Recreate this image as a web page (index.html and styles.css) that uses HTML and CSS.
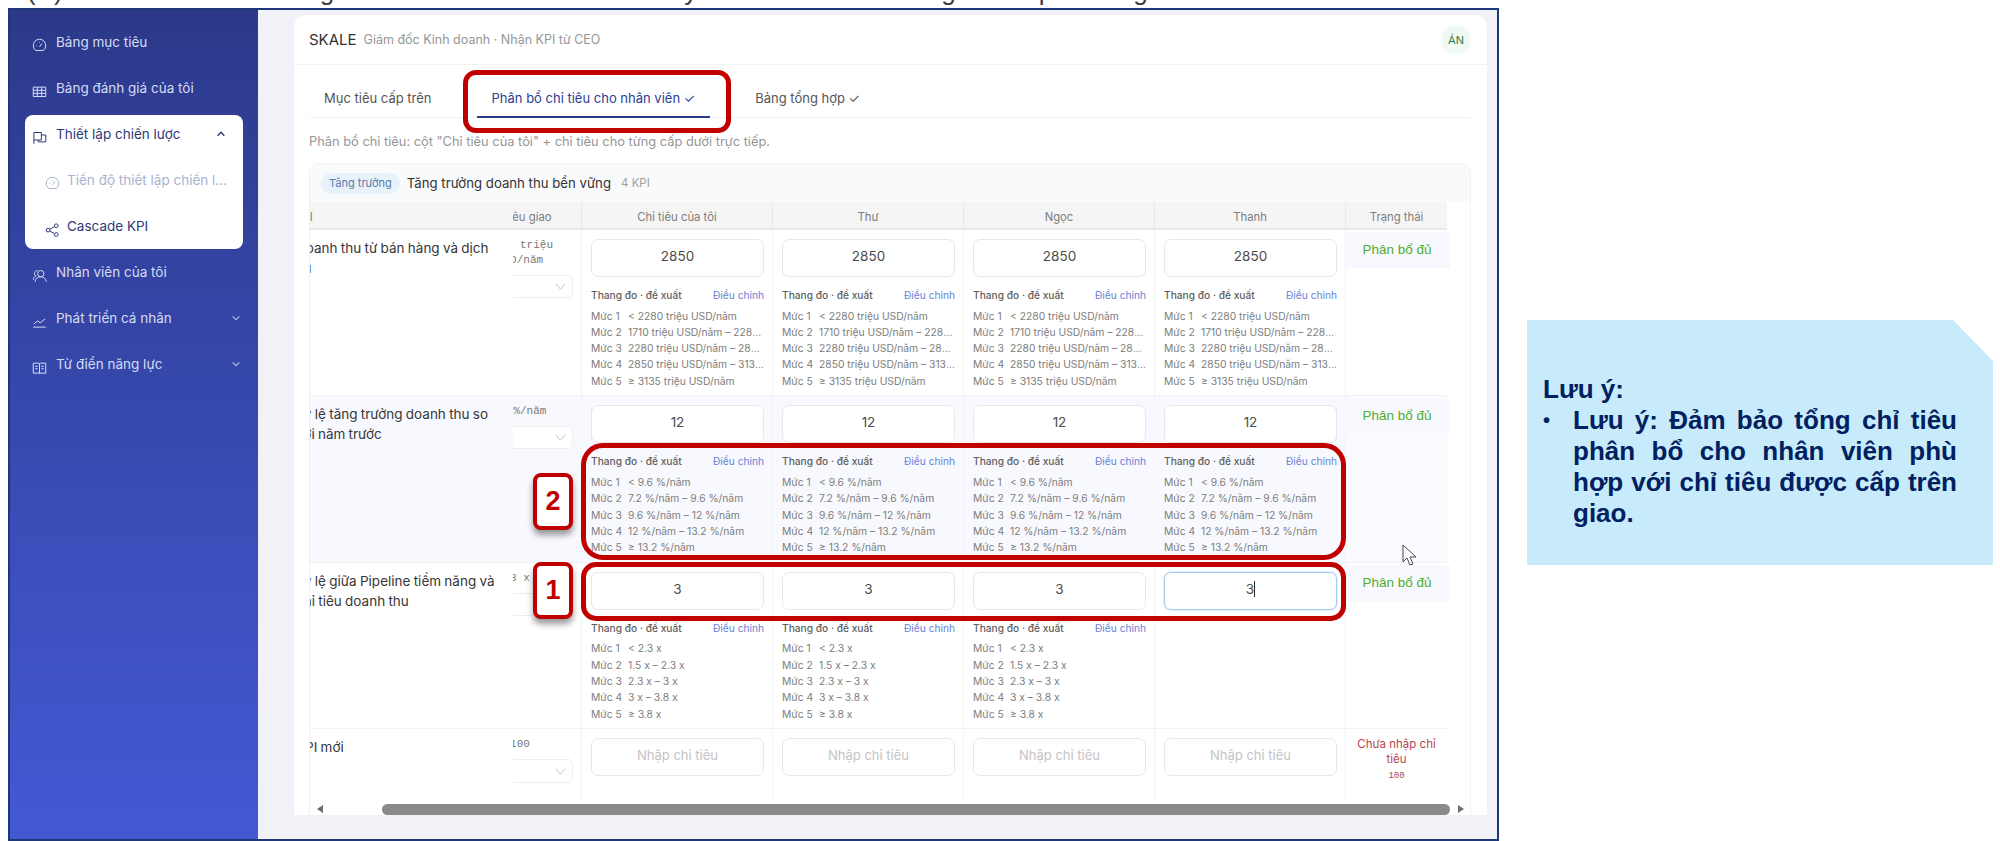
FILE: index.html
```html
<!DOCTYPE html>
<html lang="vi">
<head>
    <meta charset="utf-8">
    <title>Cascade KPI</title>
    <link rel="stylesheet" href="styles.css">
</head>
<body>
    <div class="strip">
        <span class="s0">(4)</span><span class="s1">g</span><span class="s2">y</span><span class="s3">g</span><span class="s4">p</span><span class="s5">g</span>
    </div>
    <div class="stage">
        <div class="frame">
            <div class="sidebar">
                <div class="nav-item">
                    <svg class="icon" viewBox="0 0 24 24"><path d="M6 20a10 10 0 1 1 12 0z"/><path d="M12 14l4-5M7 12h1M12 7v1"/></svg>
                    <span class="nav-text">Bảng mục tiêu</span>
                </div>
                <div class="nav-item">
                    <svg class="icon" viewBox="0 0 24 24"><path d="M2 5h20v15H2zM2 10h20M2 15h20M8.500 5v15M15.500 5v15"/></svg>
                    <span class="nav-text">Bảng đánh giá của tôi</span>
                </div>
                <div class="nav-panel">
                    <div class="nav-item nav-head">
                        <svg class="icon" viewBox="0 0 24 24"><path d="M3 22V4h12v12H3M15 8h7v11H10v-3"/></svg>
                        <span class="nav-text">Thiết lập chiến lược</span>
                        <svg class="caret" viewBox="0 0 12 12"><path d="M2 8l4-4 4 4"/></svg>
                    </div>
                    <div class="nav-item nav-sub nav-off">
                        <svg class="icon" viewBox="0 0 24 24"><path d="M6 20a10 10 0 1 1 12 0z"/><path d="M12 14l4-5M7 12h1M12 7v1"/></svg>
                        <span class="nav-text">Tiến độ thiết lập chiến lược</span>
                    </div>
                    <div class="nav-item nav-sub">
                        <svg class="icon" viewBox="0 0 24 24"><circle cx="5" cy="13" r="3"/><circle cx="18" cy="6" r="3"/><circle cx="18" cy="20" r="3"/><path d="M8 11.500l7-4M8 14.500l7 4"/></svg>
                        <span class="nav-text">Cascade KPI</span>
                    </div>
                </div>
                <div class="nav-item">
                    <svg class="icon" viewBox="0 0 24 24"><circle cx="14" cy="9" r="5"/><path d="M5 22c0-5 4-8 9-8s8 3 9 8M9 4C6 4 4 6 4 9c0 2 1 3 2 4-2 1-4 3-4 6"/></svg>
                    <span class="nav-text">Nhân viên của tôi</span>
                </div>
                <div class="nav-item">
                    <svg class="icon" viewBox="0 0 24 24"><path d="M2 21h20M3 16l6-5 4 3 8-6"/></svg>
                    <span class="nav-text">Phát triển cá nhân</span>
                    <svg class="caret" viewBox="0 0 12 12"><path d="M2 4l4 4 4-4"/></svg>
                </div>
                <div class="nav-item">
                    <svg class="icon" viewBox="0 0 24 24"><path d="M2 5h9l1 1 1-1h9v16h-9l-1 1-1-1H2zM12 6v15M5 10h4M5 14h4M15 10h4M15 14h4"/></svg>
                    <span class="nav-text">Từ điển năng lực</span>
                    <svg class="caret" viewBox="0 0 12 12"><path d="M2 4l4 4 4-4"/></svg>
                </div>
            </div>

            <div class="main">
                <div class="card">
                    <div class="card-head">
                        <span class="brand">SKALE</span>
                        <span class="brand-sub">Giám đốc Kinh doanh · Nhận KPI từ CEO</span>
                        <span class="avatar">ÁN</span>
                    </div>
                    <div class="tabs">
                        <div class="tab">Mục tiêu cấp trên</div>
                        <div class="tab tab-active">Phân bổ chỉ tiêu cho nhân viên ✓</div>
                        <div class="tab">Bảng tổng hợp ✓</div>
                    </div>
                    <p class="desc">Phân bổ chỉ tiêu: cột "Chỉ tiêu của tôi" + chỉ tiêu cho từng cấp dưới trực tiếp.</p>

                    <div class="section">
                        <div class="section-head">
                            <span class="pill">Tăng trưởng</span>
                            <span class="section-title">Tăng trưởng doanh thu bền vững</span>
                            <span class="section-count">4 KPI</span>
                        </div>

                        <div class="row row-head">
                            <div class="th th-kpi"><span>KPI</span></div>
                            <div class="th th-target"><span>Chỉ tiêu giao</span></div>
                            <div class="th">Chỉ tiêu của tôi</div>
                            <div class="th">Thư</div>
                            <div class="th">Ngọc</div>
                            <div class="th">Thanh</div>
                            <div class="th">Trạng thái</div>
                        </div>

                        <div class="row">
                            <div class="td td-kpi"><div class="kpi-name">Doanh thu từ bán hàng và dịch vụ</div></div>
                            <div class="td td-target">
                                <div class="target-value">2850 triệu<br>USD/năm</div>
                                <div class="unit-select"><svg viewBox="0 0 12 12"><path d="M1 3l5 6 5-6"/></svg></div>
                            </div>
                            <div class="td">
                                <div class="input">2850</div>
                                <div class="scale">
                                    <div class="scale-head"><span>Thang đo · đề xuất</span><a>Điều chỉnh</a></div>
                                    <div class="level"><b>Mức 1</b><span>&lt; 2280 triệu USD/năm</span></div>
                                    <div class="level"><b>Mức 2</b><span>1710 triệu USD/năm – 2280 triệu USD/năm</span></div>
                                    <div class="level"><b>Mức 3</b><span>2280 triệu USD/năm – 2850 triệu USD/năm</span></div>
                                    <div class="level"><b>Mức 4</b><span>2850 triệu USD/năm – 3135 triệu USD/năm</span></div>
                                    <div class="level"><b>Mức 5</b><span>≥ 3135 triệu USD/năm</span></div>
                                </div>
                            </div>
                            <div class="td">
                                <div class="input">2850</div>
                                <div class="scale">
                                    <div class="scale-head"><span>Thang đo · đề xuất</span><a>Điều chỉnh</a></div>
                                    <div class="level"><b>Mức 1</b><span>&lt; 2280 triệu USD/năm</span></div>
                                    <div class="level"><b>Mức 2</b><span>1710 triệu USD/năm – 2280 triệu USD/năm</span></div>
                                    <div class="level"><b>Mức 3</b><span>2280 triệu USD/năm – 2850 triệu USD/năm</span></div>
                                    <div class="level"><b>Mức 4</b><span>2850 triệu USD/năm – 3135 triệu USD/năm</span></div>
                                    <div class="level"><b>Mức 5</b><span>≥ 3135 triệu USD/năm</span></div>
                                </div>
                            </div>
                            <div class="td">
                                <div class="input">2850</div>
                                <div class="scale">
                                    <div class="scale-head"><span>Thang đo · đề xuất</span><a>Điều chỉnh</a></div>
                                    <div class="level"><b>Mức 1</b><span>&lt; 2280 triệu USD/năm</span></div>
                                    <div class="level"><b>Mức 2</b><span>1710 triệu USD/năm – 2280 triệu USD/năm</span></div>
                                    <div class="level"><b>Mức 3</b><span>2280 triệu USD/năm – 2850 triệu USD/năm</span></div>
                                    <div class="level"><b>Mức 4</b><span>2850 triệu USD/năm – 3135 triệu USD/năm</span></div>
                                    <div class="level"><b>Mức 5</b><span>≥ 3135 triệu USD/năm</span></div>
                                </div>
                            </div>
                            <div class="td">
                                <div class="input">2850</div>
                                <div class="scale">
                                    <div class="scale-head"><span>Thang đo · đề xuất</span><a>Điều chỉnh</a></div>
                                    <div class="level"><b>Mức 1</b><span>&lt; 2280 triệu USD/năm</span></div>
                                    <div class="level"><b>Mức 2</b><span>1710 triệu USD/năm – 2280 triệu USD/năm</span></div>
                                    <div class="level"><b>Mức 3</b><span>2280 triệu USD/năm – 2850 triệu USD/năm</span></div>
                                    <div class="level"><b>Mức 4</b><span>2850 triệu USD/năm – 3135 triệu USD/năm</span></div>
                                    <div class="level"><b>Mức 5</b><span>≥ 3135 triệu USD/năm</span></div>
                                </div>
                            </div>
                            <div class="td td-status"><div class="status-ok">Phân bổ đủ</div></div>
                        </div>

                        <div class="row row-alt">
                            <div class="td td-kpi"><div class="kpi-name">Tỷ lệ tăng trưởng doanh thu so với năm trước</div></div>
                            <div class="td td-target">
                                <div class="target-value">12 %/năm</div>
                                <div class="unit-select"><svg viewBox="0 0 12 12"><path d="M1 3l5 6 5-6"/></svg></div>
                            </div>
                            <div class="td">
                                <div class="input">12</div>
                                <div class="scale">
                                    <div class="scale-head"><span>Thang đo · đề xuất</span><a>Điều chỉnh</a></div>
                                    <div class="level"><b>Mức 1</b><span>&lt; 9.6 %/năm</span></div>
                                    <div class="level"><b>Mức 2</b><span>7.2 %/năm – 9.6 %/năm</span></div>
                                    <div class="level"><b>Mức 3</b><span>9.6 %/năm – 12 %/năm</span></div>
                                    <div class="level"><b>Mức 4</b><span>12 %/năm – 13.2 %/năm</span></div>
                                    <div class="level"><b>Mức 5</b><span>≥ 13.2 %/năm</span></div>
                                </div>
                            </div>
                            <div class="td">
                                <div class="input">12</div>
                                <div class="scale">
                                    <div class="scale-head"><span>Thang đo · đề xuất</span><a>Điều chỉnh</a></div>
                                    <div class="level"><b>Mức 1</b><span>&lt; 9.6 %/năm</span></div>
                                    <div class="level"><b>Mức 2</b><span>7.2 %/năm – 9.6 %/năm</span></div>
                                    <div class="level"><b>Mức 3</b><span>9.6 %/năm – 12 %/năm</span></div>
                                    <div class="level"><b>Mức 4</b><span>12 %/năm – 13.2 %/năm</span></div>
                                    <div class="level"><b>Mức 5</b><span>≥ 13.2 %/năm</span></div>
                                </div>
                            </div>
                            <div class="td">
                                <div class="input">12</div>
                                <div class="scale">
                                    <div class="scale-head"><span>Thang đo · đề xuất</span><a>Điều chỉnh</a></div>
                                    <div class="level"><b>Mức 1</b><span>&lt; 9.6 %/năm</span></div>
                                    <div class="level"><b>Mức 2</b><span>7.2 %/năm – 9.6 %/năm</span></div>
                                    <div class="level"><b>Mức 3</b><span>9.6 %/năm – 12 %/năm</span></div>
                                    <div class="level"><b>Mức 4</b><span>12 %/năm – 13.2 %/năm</span></div>
                                    <div class="level"><b>Mức 5</b><span>≥ 13.2 %/năm</span></div>
                                </div>
                            </div>
                            <div class="td">
                                <div class="input">12</div>
                                <div class="scale">
                                    <div class="scale-head"><span>Thang đo · đề xuất</span><a>Điều chỉnh</a></div>
                                    <div class="level"><b>Mức 1</b><span>&lt; 9.6 %/năm</span></div>
                                    <div class="level"><b>Mức 2</b><span>7.2 %/năm – 9.6 %/năm</span></div>
                                    <div class="level"><b>Mức 3</b><span>9.6 %/năm – 12 %/năm</span></div>
                                    <div class="level"><b>Mức 4</b><span>12 %/năm – 13.2 %/năm</span></div>
                                    <div class="level"><b>Mức 5</b><span>≥ 13.2 %/năm</span></div>
                                </div>
                            </div>
                            <div class="td td-status"><div class="status-ok">Phân bổ đủ</div></div>
                        </div>

                        <div class="row">
                            <div class="td td-kpi"><div class="kpi-name">Tỷ lệ giữa Pipeline tiềm năng và chỉ tiêu doanh thu</div></div>
                            <div class="td td-target">
                                <div class="target-value">3 x</div>
                                <div class="unit-select"><svg viewBox="0 0 12 12"><path d="M1 3l5 6 5-6"/></svg></div>
                            </div>
                            <div class="td">
                                <div class="input">3</div>
                                <div class="scale">
                                    <div class="scale-head"><span>Thang đo · đề xuất</span><a>Điều chỉnh</a></div>
                                    <div class="level"><b>Mức 1</b><span>&lt; 2.3 x</span></div>
                                    <div class="level"><b>Mức 2</b><span>1.5 x – 2.3 x</span></div>
                                    <div class="level"><b>Mức 3</b><span>2.3 x – 3 x</span></div>
                                    <div class="level"><b>Mức 4</b><span>3 x – 3.8 x</span></div>
                                    <div class="level"><b>Mức 5</b><span>≥ 3.8 x</span></div>
                                </div>
                            </div>
                            <div class="td">
                                <div class="input">3</div>
                                <div class="scale">
                                    <div class="scale-head"><span>Thang đo · đề xuất</span><a>Điều chỉnh</a></div>
                                    <div class="level"><b>Mức 1</b><span>&lt; 2.3 x</span></div>
                                    <div class="level"><b>Mức 2</b><span>1.5 x – 2.3 x</span></div>
                                    <div class="level"><b>Mức 3</b><span>2.3 x – 3 x</span></div>
                                    <div class="level"><b>Mức 4</b><span>3 x – 3.8 x</span></div>
                                    <div class="level"><b>Mức 5</b><span>≥ 3.8 x</span></div>
                                </div>
                            </div>
                            <div class="td">
                                <div class="input">3</div>
                                <div class="scale">
                                    <div class="scale-head"><span>Thang đo · đề xuất</span><a>Điều chỉnh</a></div>
                                    <div class="level"><b>Mức 1</b><span>&lt; 2.3 x</span></div>
                                    <div class="level"><b>Mức 2</b><span>1.5 x – 2.3 x</span></div>
                                    <div class="level"><b>Mức 3</b><span>2.3 x – 3 x</span></div>
                                    <div class="level"><b>Mức 4</b><span>3 x – 3.8 x</span></div>
                                    <div class="level"><b>Mức 5</b><span>≥ 3.8 x</span></div>
                                </div>
                            </div>
                            <div class="td">
                                <div class="input input-focus"><span class="typed">3</span></div>
                            </div>
                            <div class="td td-status"><div class="status-ok">Phân bổ đủ</div></div>
                        </div>

                        <div class="row row-last">
                            <div class="td td-kpi"><div class="kpi-name">KPI mới</div></div>
                            <div class="td td-target">
                                <div class="target-value">100</div>
                                <div class="unit-select unit-tall"><svg viewBox="0 0 12 12"><path d="M1 3l5 6 5-6"/></svg></div>
                            </div>
                            <div class="td"><div class="input input-empty">Nhập chỉ tiêu</div></div>
                            <div class="td"><div class="input input-empty">Nhập chỉ tiêu</div></div>
                            <div class="td"><div class="input input-empty">Nhập chỉ tiêu</div></div>
                            <div class="td"><div class="input input-empty">Nhập chỉ tiêu</div></div>
                            <div class="td td-status">
                                <div class="status-missing">Chưa nhập chỉ tiêu</div>
                                <div class="status-num">100</div>
                            </div>
                        </div>

                        <div class="scrollbar">
                            <span class="arrow-left"></span>
                            <span class="thumb"></span>
                            <span class="arrow-right"></span>
                        </div>
                    </div>
                </div>
            </div>

            <!-- chu thich mau do ve de len giao dien -->
            <div class="mark mark-tab"></div>
            <div class="mark mark-scale"></div>
            <div class="mark mark-input"></div>
            <div class="tag tag-2">2</div>
            <div class="tag tag-1">1</div>
            <svg class="cursor" viewBox="0 0 16 23"><path d="M1 1v17l4-4 3 7 3-1-3-7h6z"/></svg>
        </div>

        <div class="note">
            <div class="note-title">Lưu ý:</div>
            <div class="note-item">
                <span class="note-bullet">•</span>
                <span class="note-text">Lưu ý: Đảm bảo tổng chỉ tiêu phân bổ cho nhân viên phù hợp với chỉ tiêu được cấp trên giao.</span>
            </div>
        </div>
    </div>
</body>
</html>
```

FILE: styles.css
```css
*{
    box-sizing: border-box;
}
body{
    margin: 0;
    background-color: white;
    font-family: Inter, "Noto Sans", sans-serif;
    overflow: hidden;
}

/* dong tieu de bi cat o tren cung */
.strip{
    display: flex;
    align-items: flex-end;
    height: 8px;
    padding-left: 27px;
    overflow: hidden;
    font: 26px/26px "Liberation Sans", sans-serif;
    color: rgb(60,60,60);
}
.strip span{
    display: block;
    height: 26px;
    margin-bottom: 4px;
}
.s0{ letter-spacing: 2px; }
.s1{ margin-left: 255px; }
.s2{ margin-left: 350px; }
.s3{ margin-left: 244px; }
.s4{ margin-left: 83px; }
.s5{ margin-left: 80px; }

.stage{
    display: flex;
    align-items: flex-start;
}
.frame{
    position: relative;
    display: flex;
    width: 1491px;
    height: 833px;
    margin-left: 8px;
    border: 2px solid rgb(28,56,120);
    overflow: hidden;
}

/* sidebar */
.sidebar{
    width: 248px;
    flex-shrink: 0;
    padding-top: 9px;
    background: linear-gradient(180deg, rgb(44,57,138), rgb(67,89,212));
}
.nav-item{
    display: flex;
    align-items: center;
    height: 46px;
    padding: 0 17px 0 22px;
    color: rgb(212,220,245);
    font-size: 13.5px;
}
.nav-text{
    flex: 1;
    white-space: nowrap;
    overflow: hidden;
    text-overflow: ellipsis;
}
.icon{
    width: 15px;
    height: 15px;
    flex-shrink: 0;
    margin: 6px 9px 0 0;
    fill: none;
    stroke: currentColor;
    stroke-width: 1.6;
}
.caret{
    width: 10px;
    height: 10px;
    flex-shrink: 0;
    fill: none;
    stroke: currentColor;
    stroke-width: 1.3;
    opacity: .8;
}
.nav-panel{
    width: 218px;
    height: 134px;
    margin: 4px 0 0 15px;
    border-radius: 8px;
    background-color: white;
}
.nav-panel .nav-item{
    padding-left: 7px;
    color: rgb(45,58,120);
}
.nav-panel .nav-head{
    height: 38px;
    margin-bottom: 4px;
}
.nav-head .caret{
    stroke-width: 1.8;
    opacity: 1;
}
.nav-panel .nav-sub{
    padding: 0 14px 0 20px;
}
.nav-sub .icon{
    margin-right: 7px;
}
.nav-panel .nav-off{
    color: rgb(166,180,208);
}

/* phan noi dung */
.main{
    flex: 1;
    padding: 5px 0 0 36px;
    background-color: rgb(240,242,247);
}
.card{
    width: 1193px;
    height: 800px;
    border-radius: 12px 12px 0 0;
    background-color: white;
    overflow: hidden;
}
.card-head{
    display: flex;
    align-items: center;
    height: 50px;
    padding: 0 16px 0 15px;
    border-bottom: 1px solid rgb(240,241,243);
}
.brand{
    font-size: 15px;
    color: rgb(50,50,50);
}
.brand-sub{
    flex: 1;
    margin-left: 7px;
    font-size: 12.500px;
    color: rgb(150,150,150);
}
.avatar{
    width: 30px;
    height: 30px;
    border-radius: 50%;
    background-color: rgb(240,250,242);
    color: rgb(50,120,65);
    font-size: 11px;
    line-height: 30px;
    text-align: center;
}
.tabs{
    display: flex;
    gap: 30px;
    height: 53px;
    margin: 0 16px 0 15px;
    border-bottom: 1px solid rgb(240,241,243);
}
.tab{
    height: 53px;
    padding: 23px 15px 0;
    font-size: 13px;
    line-height: 20px;
    color: rgb(85,85,85);
}
.tab-active{
    color: rgb(45,64,150);
    border-bottom: 2px solid rgb(45,58,130);
}
.desc{
    margin: 14px 0 11px 15px;
    font-size: 12.850px;
    line-height: 20px;
    color: rgb(150,150,150);
}

/* bang */
.section{
    margin: 0 16px 0 15px;
    border: 1px solid rgb(240,241,243);
    border-bottom: none;
    border-radius: 10px 10px 0 0;
}
.section-head{
    display: flex;
    align-items: center;
    height: 38px;
    padding-left: 11px;
    border-radius: 10px 10px 0 0;
    background-color: rgb(249,250,251);
}
.pill{
    height: 21px;
    padding: 0 8px;
    border-radius: 11px;
    background-color: rgb(232,242,251);
    color: rgb(90,125,170);
    font-size: 11px;
    line-height: 21px;
}
.section-title{
    margin-left: 7px;
    font-size: 13.200px;
    color: rgb(50,50,50);
}
.section-count{
    margin-left: 10px;
    font-size: 11.500px;
    color: rgb(160,160,160);
}
.row{
    display: grid;
    grid-template-columns: 203px 69px repeat(4,191px) 101px;
    width: 1137px;
    border-bottom: 1px solid rgb(241,241,241);
}
.row-alt .td{
    background-color: rgb(248,249,254);
}
.row-head{
    height: 28px;
    background-color: rgb(245,245,245);
    border-bottom: 2px solid rgb(232,232,232);
}
.th{
    border-right: 1px solid rgb(232,232,232);
    font-size: 11.300px;
    line-height: 30px;
    text-align: center;
    color: rgb(125,125,125);
    white-space: nowrap;
    overflow: hidden;
}
.th:last-child{
    border-right: none;
}
.th-kpi{
    border-right: none;
    text-align: left;
}
.th-kpi span{
    margin-left: -15px;
}
.th-target{
    text-align: left;
}
.th-target span{
    margin-left: -28px;
}
.td{
    padding: 9px 8px 6.500px 9px;
    border-right: 1px solid rgb(243,243,243);
}
.td:last-child{
    border-right: none;
}
.td-kpi{
    padding: 8px 0 0;
    border-right: none;
    overflow: hidden;
}
.kpi-name{
    width: 206px;
    margin-left: -14px;
    font-size: 13.500px;
    line-height: 20px;
    word-spacing: -.5px;
    color: rgb(55,55,55);
}
.td-target{
    padding: 8px 8px 0 0;
    overflow: hidden;
}
.target-value{
    width: 120px;
    margin-left: -53px;
    font: 11px/15px "Liberation Mono", monospace;
    text-align: center;
    color: rgb(120,120,120);
    white-space: nowrap;
}
.unit-select{
    display: flex;
    align-items: center;
    justify-content: flex-end;
    height: 23px;
    margin: 7px 0 0 -8px;
    padding-right: 6px;
    border: 1px solid rgb(238,238,238);
    border-radius: 5px;
    background-color: white;
}
.unit-tall{
    height: 24px;
}
.unit-select svg{
    width: 11px;
    height: 11px;
    fill: none;
    stroke: rgb(190,190,190);
}
.input{
    height: 38px;
    padding-top: 6px;
    border: 1px solid rgb(232,232,232);
    border-radius: 7px;
    background-color: white;
    font-size: 13.500px;
    line-height: 20px;
    text-align: center;
    color: rgb(75,75,75);
}
.input-empty{
    color: rgb(196,196,196);
    font-size: 13px;
}
.input-focus{
    border-color: rgb(170,205,240);
    box-shadow: 0 0 0 1px rgb(225,238,250);
}
.typed{
    border-right: 1px solid rgb(40,40,40);
}
.scale{
    margin-top: 11px;
    color: rgb(125,125,125);
    font-size: 10.300px;
    line-height: 16.300px;
}
.scale-head{
    display: flex;
    justify-content: space-between;
    margin-bottom: 4.500px;
    font-size: 10.200px;
    font-weight: 500;
    line-height: 15px;
    color: rgb(95,95,95);
}
.scale-head a{
    font-weight: 400;
    color: rgb(105,130,215);
}
.level{
    display: flex;
    white-space: nowrap;
}
.level b{
    width: 37px;
    flex-shrink: 0;
    font-weight: normal;
}
.level span{
    overflow: hidden;
    text-overflow: ellipsis;
}
.td-status{
    padding: 2px 0 0;
    text-align: center;
    overflow: visible;
}
.row-alt .td-status{
    background-color: rgb(250,251,254);
}
.status-ok{
    height: 36px;
    margin: 0 -3px 0 -2px;
    padding-top: 8px;
    background-color: rgb(247,249,254);
    color: rgb(82,173,44);
    font: 13.500px/20px "Liberation Sans", sans-serif;
}
.status-missing{
    padding: 6px 8px 0;
    color: rgb(180,70,78);
    font-size: 11.500px;
    line-height: 15px;
}
.status-num{
    margin-top: 3px;
    color: rgb(180,70,78);
    font: 9px/12px "Liberation Mono", monospace;
}
.row-last{
    height: 71px;
    border-bottom: none;
}
.scrollbar{
    display: flex;
    align-items: flex-start;
    height: 14px;
    padding: 4px 0 0 7px;
}
.arrow-left{
    width: 0;
    margin-top: 1px;
    border: 4px solid transparent;
    border-left: none;
    border-right: 6px solid rgb(110,110,110);
}
.thumb{
    width: 1068px;
    height: 11px;
    margin-left: 59px;
    border-radius: 6px;
    background-color: rgb(138,138,138);
}
.arrow-right{
    width: 0;
    margin: 1px 0 0 8px;
    border: 4px solid transparent;
    border-right: none;
    border-left: 6px solid rgb(110,110,110);
}

/* khung do, so thu tu, con tro chuot */
.mark{
    position: absolute;
    border: 5px solid rgb(192,0,0);
}
.mark-tab{
    left: 453px;
    top: 60px;
    width: 268px;
    height: 63px;
    border-radius: 13px;
}
.mark-scale{
    left: 571px;
    top: 433px;
    width: 765px;
    height: 117px;
    border-radius: 22px;
}
.mark-input{
    left: 571px;
    top: 552px;
    width: 765px;
    height: 59px;
    border-radius: 15px;
}
.tag{
    position: absolute;
    left: 523px;
    width: 40px;
    height: 57px;
    border: 4px solid rgb(192,0,0);
    border-radius: 8px;
    background-color: white;
    box-shadow: 0 5px 6px rgba(0,0,0,.4);
    color: rgb(192,0,0);
    font: bold 27px/49px "Liberation Sans", sans-serif;
    text-align: center;
}
.tag-2{
    top: 463px;
}
.tag-1{
    top: 552px;
}
.cursor{
    position: absolute;
    left: 1392px;
    top: 534px;
    width: 16px;
    height: 23px;
    fill: white;
    stroke: rgb(70,70,80);
    stroke-width: 1;
}

/* ghi chu ben phai */
.note{
    width: 466px;
    height: 245px;
    margin: 312px 0 0 28px;
    padding: 54px 36px 0 16px;
    background-color: rgb(199,235,251);
    clip-path: polygon(0 0, 426px 0, 100% 41px, 100% 100%, 0 100%);
    color: rgb(0,32,96);
    font: bold 26px/31px "Liberation Sans", sans-serif;
}
.note-item{
    display: flex;
}
.note-bullet{
    width: 30px;
    flex-shrink: 0;
    font-size: 20px;
}
.note-text{
    flex: 1;
    text-align: justify;
}
```
